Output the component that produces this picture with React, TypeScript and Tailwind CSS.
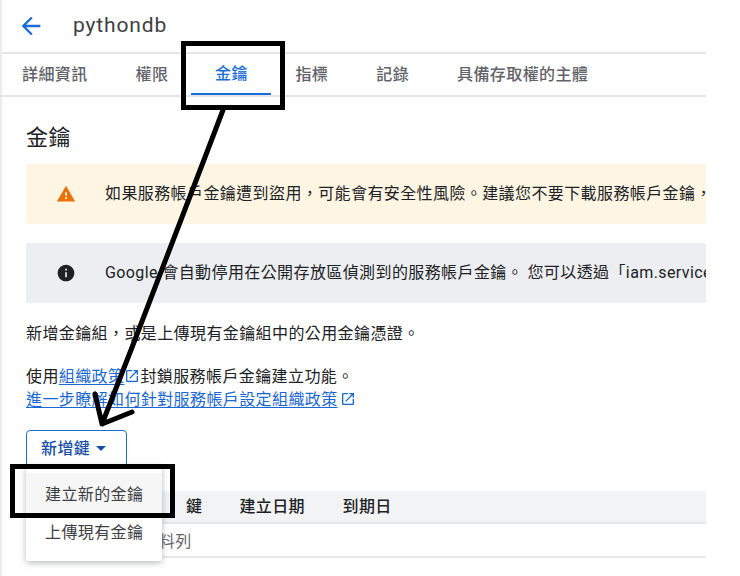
import React from 'react'

const CJK = "font-['Roboto','Noto_Sans_CJK_TC','Noto_Sans_CJK_SC',sans-serif]"

const OpenInNew = () => (
	<svg viewBox="0 0 24 24" className="inline-block w-[16px] h-[16px] fill-[#1967d2] align-[-2px]">
		<path d="M19 19H5V5h7V3H5c-1.11 0-2 .9-2 2v14c0 1.1.89 2 2 2h14c1.1 0 2-.9 2-2v-7h-2v7zM14 3v2h3.59l-9.83 9.83 1.41 1.41L19 6.41V10h2V3h-7z" />
	</svg>
)

const tabs = ['詳細資訊', '權限', '金鑰', '指標', '記錄', '具備存取權的主體']

const Tabs = () => (
	<nav className="flex h-[43px] border-b-2 border-[#e4e5e7] -ml-[4px]">
		{tabs.map((t) =>
			t === '金鑰' ? (
				<div key={t} className="h-full w-[80px] -ml-[1px] flex items-center justify-center text-[#1a6dd6] border-b-2 border-[#1a6dd6] font-medium">
					{t}
				</div>
			) : (
				<div key={t} className="h-full px-6 flex items-center text-[#5f6368] font-medium">
					{t}
				</div>
			)
		)}
	</nav>
)

const Banner = ({ bg, icon, children }: { bg: string; icon: React.ReactNode; children: React.ReactNode }) => (
	<div className={`h-[60px] flex items-center rounded-[2px] overflow-hidden whitespace-nowrap ${bg}`}>
		<div className="w-[79px] pl-[30px] shrink-0 flex">{icon}</div>
		<div className="text-[#202124]">{children}</div>
	</div>
)

const Table = () => (
	<div>
		<div className="h-[33px] bg-[#f1f3f4] border-b-2 border-[#e4e5e7] pl-[160px] flex items-center gap-[37.5px] font-medium text-[#202124]">
			<span className="-mr-[0.5px]">鍵</span>
			<span>建立日期</span>
			<span>到期日</span>
		</div>
		<div className="h-[34px] border-b-2 border-[#e8e9eb] pl-[18px] flex items-center text-[#5f6368]">
			<span className="mt-[3px]">沒有可顯示的資料列</span>
		</div>
	</div>
)

// menu opened from the add key button
const Menu = () => (
	<div className="absolute left-[26px] top-[465px] w-[136px] h-[96px] bg-white rounded-[2px] shadow-[0_2px_6px_rgba(60,64,67,0.35)] py-[8px] text-[#3c4043]">
		<div className="h-[43px] pl-[19px] flex items-center bg-[#f6f6f6]">建立新的金鑰</div>
		<div className="h-[33px] pl-[19px] flex items-center">上傳現有金鑰</div>
	</div>
)

// hand drawn marks on top of the screenshot
const Annotations = () => (
	<>
		<div className="absolute left-[181px] top-[41px] w-[104px] h-[69px] border-[5px] border-black" />
		<div className="absolute left-[10px] top-[464px] w-[165px] h-[54px] border-[5px] border-black" />
		<svg viewBox="0 0 740 576" className="absolute left-0 top-0 w-[740px] h-[576px] pointer-events-none">
			<path
				d="M223 110 L207 152 L174 238 L131 350 L102 424 M95 394 L102 424 L132 412"
				fill="none"
				stroke="#000"
				strokeWidth="5"
				strokeLinecap="round"
				strokeLinejoin="round"
			/>
		</svg>
	</>
)

export default function App() {
	return (
		<div className={`relative w-[740px] h-[576px] overflow-hidden bg-white text-[16px] tracking-[0.4px] ${CJK}`}>
			<div className="w-[706px] h-full border-l-2 border-[#f3e9ea]">
				<header className="h-[54px] flex items-center border-b-2 border-[#e4e5e7]">
					<svg viewBox="0 0 24 24" className="w-[28px] h-[28px] fill-[#1a6dd6] ml-[15px]">
						<path d="M20 11H7.83l5.59-5.59L12 4l-8 8 8 8 1.41-1.41L7.83 13H20v-2z" />
					</svg>
					<h1 className="ml-[28px] text-[21px] tracking-[0.85px] text-[#3c4043] font-normal -mt-[1px]">pythondb</h1>
				</header>
				<Tabs />
				<main className="pl-[24px]">
					<h2 className="mt-[26px] h-[30px] text-[22px] tracking-[0.5px] leading-[30px] text-[#202124] font-normal">金鑰</h2>
					<div className="mt-[11px] flex flex-col gap-[19px]">
						<Banner
							bg="bg-[#fef6e3]"
							icon={
								<svg viewBox="0 0 24 24" className="w-[20px] h-[20px] fill-[#e8710a]">
									<path d="M1 21h22L12 2 1 21zm12-3h-2v-2h2v2zm0-4h-2v-4h2v4z" />
								</svg>
							}
						>
							{'如果服務帳戶金鑰遭到盜用\uFF0C可能會有安全性風險\u3002建議您不要下載服務帳戶金鑰\uFF0C而應改用其他方式'}
						</Banner>
						<Banner
							bg="bg-[#eceef1]"
							icon={
								<svg viewBox="0 0 24 24" className="w-[20px] h-[20px] fill-[#202124]">
									<path d="M12 2C6.48 2 2 6.48 2 12s4.48 10 10 10 10-4.48 10-10S17.52 2 12 2zm1 15h-2v-6h2v6zm0-8h-2V7h2v2z" />
								</svg>
							}
						>
							Google 會自動停用在公開存放區偵測到的服務帳戶金鑰。 您可以透過「iam.serviceAccountKeyExposureResponse」
						</Banner>
					</div>
					<p className="mt-[19px] leading-[24px] text-[#202124] whitespace-nowrap">
						{'新增金鑰組\uFF0C或是上傳現有金鑰組中的公用金鑰憑證\u3002'}
					</p>
					<p className="mt-[19px] leading-[23px] text-[#202124] whitespace-nowrap">
						使用<span className="text-[#1967d2] underline underline-offset-2">組織政策</span>
						<OpenInNew />
						封鎖服務帳戶金鑰建立功能。
						<br />
						<span className="text-[#1967d2] underline underline-offset-2">進一步瞭解如何針對服務帳戶設定組織政策</span>
						<span className="ml-[2px]">
							<OpenInNew />
						</span>
					</p>
					<button className="mt-[19px] w-[101px] h-[37px] border border-[#1a6dd6] rounded-[4px] flex items-center pl-[14px] gap-[6px] text-[#174ea6] font-medium">
						新增鍵
						<span className="w-0 h-0 border-x-[5px] border-x-transparent border-t-[5px] border-t-[#174ea6]" />
					</button>
					<div className="mt-[24px]">
						<Table />
					</div>
				</main>
			</div>
			<Menu />
			<Annotations />
		</div>
	)
}
